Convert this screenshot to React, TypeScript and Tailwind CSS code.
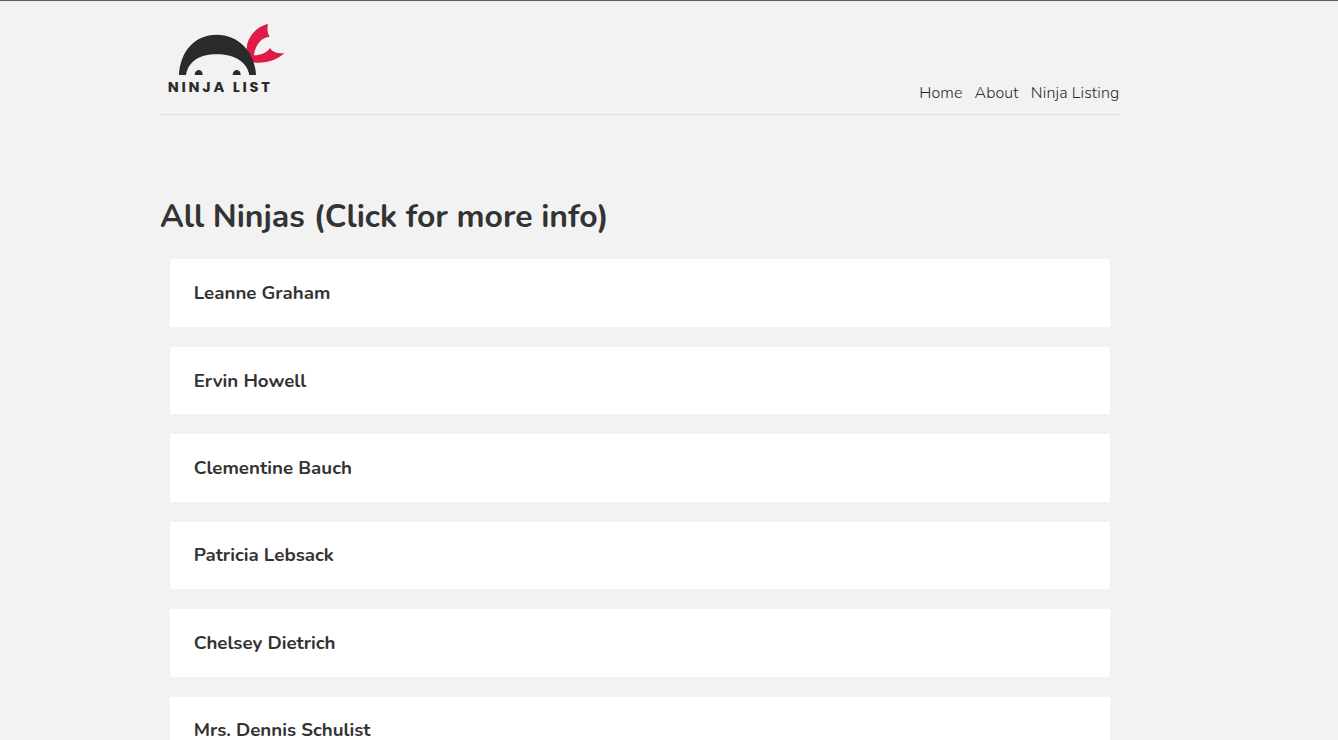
const ninjas = [
  "Leanne Graham",
  "Ervin Howell",
  "Clementine Bauch",
  "Patricia Lebsack",
  "Chelsey Dietrich",
  "Mrs. Dennis Schulist",
];

const links = ["Home", "About", "Ninja Listing"];

function Logo() {
  return (
    <svg className="h-[85px] w-[135px]" viewBox="0 0 405 255" role="img">
      <path
        d="M260 100C262 68 286 36 324 26C321 42 322 54 329 65C306 67 287 86 281 122L266 128Z"
        fill="#df1c47"
      />
      <path
        d="M266 118L279 121C298 122 320 114 330 99C337 111 352 116 373 115C350 136 316 147 276 142Z"
        fill="#df1c47"
      />
      <path
        d="M57 180C61 108 104 59 170 59C234 59 284 108 288 180L268 180C261 140 222 118 170 118C118 118 85 140 78 180Z"
        fill="#2a2a2a"
      />
      <path d="M104 180C104 172 109 165 117 165C124 165 128 172 128 180Z" fill="#2a2a2a" />
      <path d="M218 180C218 172 223 165 231 165C238 165 242 172 242 180Z" fill="#2a2a2a" />
      <text
        x="23"
        y="231"
        textLength="307"
        fontSize="44"
        fontWeight="700"
        fill="#2a2a2a"
        className="font-['Poppins','Inter',sans-serif]"
      >
        NINJA LIST
      </text>
    </svg>
  );
}

export default function App() {
  return (
    <div className="h-screen overflow-hidden border-t border-[#5f5b63] bg-[#f2f2f2] font-['Nunito',sans-serif] text-[#333333]">
      <div className="mr-[218px] ml-[160px] w-[960px]">
        <nav className="flex h-[114px] items-end justify-between border-b border-[#dddddd] pb-2.5">
          <div className="mb-[4px]">
            <Logo />
          </div>
          <div className="flex gap-3 pr-[0.5px] text-base leading-[22px] font-[350] tracking-[0.12px] text-[#2b2b2b]">
            {links.map((label) => (
              <a key={label} href="#">
                {label}
              </a>
            ))}
          </div>
        </nav>
        <main className="pt-20">
          <h1 className="text-[32px] leading-[44px] font-bold tracking-[-0.02px]">
            All Ninjas (Click for more info)
          </h1>
          <ul className="mx-2.5 mt-[20.35px] flex flex-col gap-5">
            {ninjas.map((name) => (
              <li
                key={name}
                className="flex h-[67.45px] shrink-0 items-center bg-white px-[23.7px] pt-[1.6px]"
              >
                <h3 className="text-[18.72px] leading-[25.5px] font-bold">{name}</h3>
              </li>
            ))}
          </ul>
        </main>
      </div>
    </div>
  );
}
